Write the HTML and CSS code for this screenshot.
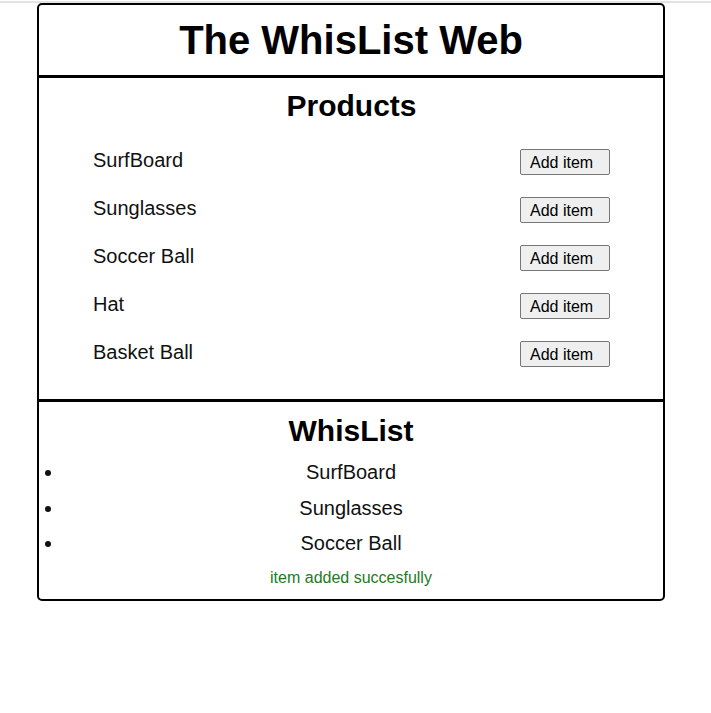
FILE: index.html
```html
<!DOCTYPE html>
<html lang="en">
<head>
    <meta charset="UTF-8">
    <meta name="viewport" content="width=device-width, initial-scale=1.0">
    <title>The WhisList Web</title>
    <link rel="stylesheet" href="styles.css">
</head>
<body>
    <div class="top-line"></div>

    <div class="card">
        <header class="card-header">
            <h1>The WhisList Web</h1>
        </header>

        <section class="products">
            <h2>Products</h2>
            <div class="product-row">
                <span>SurfBoard</span>
                <button type="button">Add item</button>
            </div>
            <div class="product-row">
                <span>Sunglasses</span>
                <button type="button">Add item</button>
            </div>
            <div class="product-row">
                <span>Soccer Ball</span>
                <button type="button">Add item</button>
            </div>
            <div class="product-row">
                <span>Hat</span>
                <button type="button">Add item</button>
            </div>
            <div class="product-row">
                <span>Basket Ball</span>
                <button type="button">Add item</button>
            </div>
        </section>

        <section class="wishlist">
            <h2>WhisList</h2>
            <ul class="wish-items">
                <li>SurfBoard</li>
                <li>Sunglasses</li>
                <li>Soccer Ball</li>
            </ul>
            <p class="message">item added succesfully</p>
        </section>
    </div>
</body>
</html>
```

FILE: styles.css
```css
body {
    font-family: "Liberation Sans", Arial, sans-serif;
    background-color: #fff;
    color: #000;
    margin: 0;
    padding: 1px 0 0 0;
}

.top-line {
    height: 2px;
    background-color: #e3e3e3;
}

.card {
    box-sizing: border-box;
    width: 628px;
    margin-left: 37px;
    border: 2px solid #000;
    border-radius: 5px;
}

.card-header {
    border-bottom: 3px solid #000;
    padding: 12px 0;
}

h1 {
    font-size: 40px;
    line-height: 46px;
    text-align: center;
    margin: 0;
}

h2 {
    font-size: 30px;
    line-height: 34px;
    text-align: center;
    margin: 0;
}

.products {
    border-bottom: 3px solid #000;
    padding: 11px 53px 23px 54px;
}

.products h2 {
    margin-bottom: 13px;
}

.product-row {
    display: flex;
    justify-content: space-between;
    align-items: center;
    height: 48px;
    font-size: 20px;
    color: #111;
}

.product-row button {
    font-family: "Liberation Sans", Arial, sans-serif;
    font-size: 16px;
    line-height: 17px;
    width: 90px;
    margin-top: 3px;
    padding: 4px 0 3px 9px;
    text-align: left;
    color: #000;
    background-color: #efefef;
    border: 1px solid #767676;
    border-radius: 2px;
}

.wishlist {
    padding: 12px 0 12px 0;
}

.wish-items {
    margin: 7px 0 0 0;
    padding: 0 25px;
}

.wish-items li {
    font-size: 20px;
    line-height: 23.5px;
    padding: 6px 0;
    text-align: center;
    color: #111;
}

.message {
    font-size: 16px;
    line-height: 18px;
    margin: 7px 0 0 0;
    text-align: center;
    color: #237a23;
}
```
